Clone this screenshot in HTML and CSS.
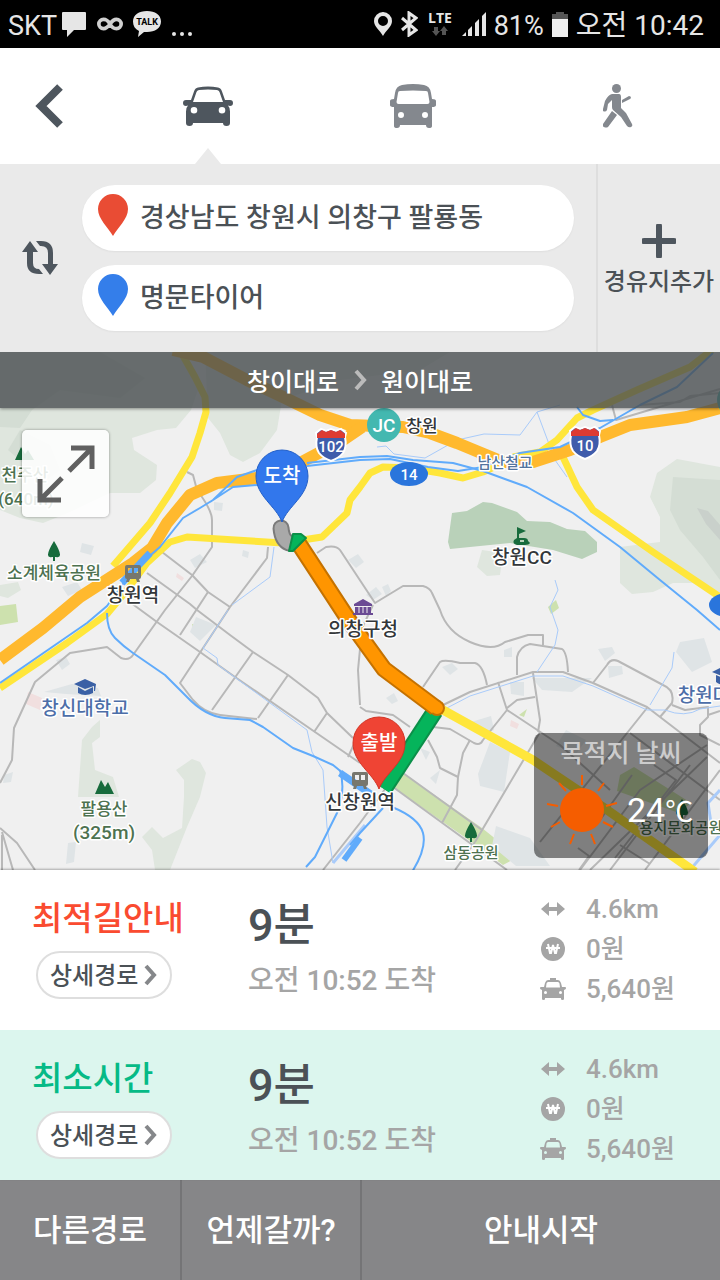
FILE: index.html
```html
<!DOCTYPE html>
<html lang="ko">
<head>
    <meta charset="UTF-8">
    <meta name="viewport" content="width=device-width, initial-scale=1.0">
    <title>길찾기</title>
    <link rel="stylesheet" href="styles.css">
</head>
<body>
    <!-- shared icons -->
    <svg class="sprite" aria-hidden="true">
        <symbol id="icon-distance" viewBox="0 0 26 16">
            <path d="M1 8 9 1v5h8V1l8 7-8 7v-5H9v5z"/>
        </symbol>
        <symbol id="icon-won" viewBox="0 0 26 26">
            <circle cx="13" cy="13" r="12"/>
            <path d="M8 8l2 9h1l2-8 2 8h1l2-9M6 12h14" fill="none" stroke="#fff" stroke-width="2"/>
        </symbol>
        <symbol id="icon-taxi" viewBox="0 0 26 24">
            <path fill-rule="evenodd" d="M10 1h6v2h2q2 0 3 3l1 4h3q1 0 1 1t-1 1.500l-1 .5v9q0 1-1.500 1T21 22v-1H5v1q0 1-1.500 1T2 22v-9l-1-.5Q0 12 0 11t1-1h3l1-4q1-3 3-3h2zM8 5Q7 5 6.500 6.500L6 10.500h14l-.5-4Q19 5 18 5zM5.500 14a1.500 1.500 0 1 0 0 3 1.500 1.500 0 0 0 0-3zM20.500 14a1.500 1.500 0 1 0 0 3 1.500 1.500 0 0 0 0-3z"/>
        </symbol>
        <symbol id="icon-next" viewBox="0 0 14 22">
            <path d="M3 2l8 9-8 9" fill="none" stroke="currentColor" stroke-width="4"/>
        </symbol>
        <symbol id="icon-pin" viewBox="0 0 32 44">
            <path d="M16 43C11 34 1 26 1 16a15 15 0 0 1 30 0c0 10-10 18-15 27z"/>
        </symbol>
    </svg>

    <header class="status-bar">
        <div class="status-left">
            <span class="carrier">SKT</span>
            <svg width="26" height="26" viewBox="0 0 26 26" fill="#e6e6e6"><path d="M2 1h22q1 0 1 1v16q0 1-1 1H13l-7 7v-7H2q-1 0-1-1V2q0-1 1-1z"/></svg>
            <svg width="26" height="16" viewBox="0 0 28 16" fill="none" stroke="#d0d0d0" stroke-width="4"><path d="M14 8C11 3 9 3 7 3a5 5 0 0 0 0 10c3 0 5-2 7-5s4-5 7-5a5 5 0 0 1 0 10c-3 0-5-1-7-5z"/></svg>
            <svg width="28" height="26" viewBox="0 0 28 26" fill="#e6e6e6"><path d="M14 0c8 0 14 4 14 10.500S22 21 14 21l-3 0-6 5 1-6c-4-2-6-5-6-9.500C0 4 6 0 14 0z"/><text class="talk" x="14" y="14" fill="#000">TALK</text></svg>
            <svg width="22" height="26" viewBox="0 0 22 26" fill="#e6e6e6"><circle cx="3" cy="23" r="2"/><circle cx="11" cy="23" r="2"/><circle cx="19" cy="23" r="2"/></svg>
        </div>
        <div class="status-right">
            <svg width="18" height="24" viewBox="0 0 18 24" fill="#e6e6e6"><path fill-rule="evenodd" d="M9 24C6 18 0 15 0 9a9 9 0 0 1 18 0c0 6-6 9-9 15zM9 4a5 5 0 1 0 0 10A5 5 0 0 0 9 4z"/></svg>
            <svg width="18" height="26" viewBox="0 0 18 26" fill="none" stroke="#e6e6e6" stroke-width="3"><path d="M2 7l14 12-7 5V2l7 5L2 19"/></svg>
            <svg class="network" width="28" height="26" viewBox="0 0 28 26"><text class="lte" x="14" y="12" fill="#e6e6e6">LTE</text><path d="M8 16h4v4h2l-4 5-4-5h2zM18 15l4 5h-2v4h-4v-4h-2z" fill="#555"/></svg>
            <svg width="24" height="24" viewBox="0 0 24 24" fill="#e6e6e6"><path d="M0 24l4-4v4zM6 18l4-4v10H6zM13 11l4-4v17h-4zM20 4l4-4v24h-4z"/></svg>
            <span class="battery">81%</span>
            <svg width="16" height="25" viewBox="0 0 16 25"><path d="M4 0h8v2h4v5H0V2h4z" fill="#555"/><path d="M0 7h16v18H0z" fill="#efefef"/></svg>
            <time class="clock">오전 10:42</time>
        </div>
    </header>

    <nav class="modes">
        <button type="button" class="back" aria-label="뒤로">
            <svg width="30" height="46" viewBox="0 0 30 46"><path d="M26 4 7 23l19 19" fill="none" stroke="#4e565e" stroke-width="8"/></svg>
        </button>
        <button type="button" class="mode active" aria-label="자동차">
            <svg width="50" height="40" viewBox="0 0 50 40"><path fill-rule="evenodd" d="M15 1.500Q25-.5 35 1.500q3 .5 4 4L42 14h5q3 0 3 3t-3 3l-2-.5q2 2 2 6V37q0 3-3.500 3T40 37H10q0 3-3.500 3T3 37V25.500q0-4 2-6L3 20q-3 0-3-3t3-3h5l3-8.500q1-3.500 4-4zM16 4q-2 .5-2.500 2L10 16h30L36.500 6Q36 4.500 34 4q-9-1-18 0zM11 21a3.300 3.300 0 1 0 0 6.600 3.300 3.300 0 0 0 0-6.600zM39 21a3.300 3.300 0 1 0 0 6.600 3.300 3.300 0 0 0 0-6.600z"/></svg>
        </button>
        <button type="button" class="mode" aria-label="버스">
            <svg width="46" height="44" viewBox="0 0 46 44"><path fill-rule="evenodd" d="M12 1q11-2 22 0 6 1 7 8l1 6q4 0 4 2v4q0 2-4 2v19q0 2-3 2t-3-3H10q0 3-3 3t-3-2V23q-4 0-4-2v-4q0-2 4-2l1-6q1-7 7-8zM10 7q-2 0-2 2L6.500 18q0 2 2 2h29q2 0 2-2L38 9q0-2-2-2-13-1-26 0zM11 28a3 3 0 1 0 0 6 3 3 0 0 0 0-6zM35 28a3 3 0 1 0 0 6 3 3 0 0 0 0-6z"/></svg>
        </button>
        <button type="button" class="mode" aria-label="도보">
            <svg width="30" height="44" viewBox="0 0 30 44"><circle cx="13.500" cy="4.500" r="4.500"/><path d="M9 10h7q2 0 2 3v11l5 5 6 11q1 2-1 3t-4-1l-6-9-8-7q-1-1-1-3V16l-4 4-1 6q-1 2-3 1.500T0 25l2-8q3-6 7-7zM19 16l7-4q2 0 2 2l-1 1-8 4zM9 27l5 4-9 12q-2 1-4 0t-1-3z"/></svg>
        </button>
    </nav>

    <form class="route-form">
        <button type="button" class="swap" aria-label="출발지와 도착지 바꾸기">
            <svg width="36" height="34" viewBox="0 0 36 34" fill="#4e565e"><path d="M8 0l8 11h-5v11q0 6 6 6l4 5h-4Q5 33 5 22V11H0zM28 34l-8-11h6V12q0-7-7-7h-1l-4-5h5q12 0 12 12v11h5z"/></svg>
        </button>
        <div class="places">
            <label class="place start">
                <svg width="32" height="44" role="img" aria-label="출발지"><use href="#icon-pin"/></svg>
                <input type="text" name="start" value="경상남도 창원시 의창구 팔룡동">
            </label>
            <label class="place goal">
                <svg width="32" height="44" role="img" aria-label="도착지"><use href="#icon-pin"/></svg>
                <input type="text" name="goal" value="명문타이어">
            </label>
        </div>
        <button type="button" class="add-stop">
            <svg width="34" height="34" viewBox="0 0 34 34"><path d="M17 2v30M2 17h30" stroke="#4e565e" stroke-width="6" stroke-linecap="round"/></svg>
            <span>경유지추가</span>
        </button>
    </form>

    <main class="map">
        <svg class="map-canvas" viewBox="0 352 720 518" preserveAspectRatio="xMidYMid slice">
            <rect x="-400" y="0" width="1600" height="1400" fill="#f0f0f0"/>

            <!-- hills and parks -->
            <g fill="#dfe6de">
                <path d="M0 352H180L198 390 191 410 176 428 157 430 132 438 134 450 157 465 156 480 140 493H110L68 513 43 523 20 518 0 510z"/>
                <path d="M205 352H450L420 370 340 380 282 400 277 430 260 453 243 462 230 455 220 433 208 418z"/>
                <path d="M677 459 720 467V597L693 583H673L653 592 632 594 620 583V547L660 542V517L650 497 657 473z"/>
                <path d="M482 550 503 553 500 575 487 576 477 567z"/>
                <path d="M92 727 100 720V737L92 743 95 770 113 777 119 797H78L82 740z"/>
                <path d="M176 770 192 759 200 762 206 773 200 797 187 827 170 870H155L152 850 142 837 152 827 163 838 182 828 184 797V780z"/>
                <path d="M0 585 18 582 21 590 8 598 0 596z"/>
            </g>
            <g fill="#d4ddd4">
                <path d="M0 352H100L145 378 120 398 60 390 32 410 20 428 0 427z"/>
                <path d="M20 430 8 450 22 462 40 485 60 470 50 445z"/>
                <path d="M673 477 720 480V580L703 557 680 530 670 510z"/>
            </g>
            <path d="M697 508 708 511 720 525V540L706 524z" fill="#c9d0cb"/>
            <path d="M452 513 467 511 483 502 492 503 517 512 527 521 550 522 567 529 585 531 597 542V552L582 559 553 550 510 543 450 549 448 542z" fill="#b9d1b9"/>
            <g fill="#cde1ae">
                <path d="M403 773 482 828 518 857 503 865 473 843 393 787z"/>
                <path d="M0 606 16 604 18 622 0 625zM519 715 527 709 524 717zM192 624l8 1 0 6-6 2zM548 607l8-7 3 8-8 6zM620 775l14-8 57 36-12 10-62-22z"/>
            </g>
            <g fill="#dfe4e6">
                <path d="M44 692 72 684 98 688 101 696 66 694zM56 660 66 657 70 664 62 670zM82 543l12 3-3 9-11-3zM62 587l15-5 5 8-14 6zM190 560l10-6 7 8-12 6zM214 502l9 1-1 8-8-1zM243 550l6 2-1 6-6-2zM196 617l20 8-16 16-10-9zM348 560l10-6 6 8-8 6zM366 595l10-8 6 7-9 6zM382 587l6-3 3 7-5 5zM4 775l9-3-2 10-8 1zM68 843l8-1-2 20-8 2z"/>
                <path d="M504 650l8-3v10l-8 0zM442 667l10-4 6 6-8 6zM386 698l8-5 4 8-6 3zM510 682h14v14l-13-2zM532 678h60l-20 14-30-2zM598 649l14-2 3 6-10 8zM608 666l14 0 1 8-14 4zM680 642l24-4 8 24-20 10-16-20zM490 742l20 10-6 40-24-6-2-12zM471 722l20-6 3 14-12 6zM496 826l34 12 20 28h-34l-24-20zM430 778l10-8-4 14zM566 730l20 10-10 14-20-8zM420 748l10 4-4 8z"/>
            </g>
            <path d="M28 692l14 6-2 12-14-6zM511 720l8 4-2 5-7-3zM177 573l7 5-2 3-6-4z" fill="#f1dfdf"/>

            <!-- minor roads -->
            <g class="road minor">
                <path d="M187 472 193 475 197 490Q212 510 212 520V547L192 576 165 610 133 655Q129 661 121 658L107 647 70 653 35 682 14 728 12 760 0 783"/>
                <path d="M162 552 192 575 208 592 230 607M268 547 267 558 230 607 180 683 193 700Q204 713 220 715L257 719"/>
                <path d="M147 573 190 604 197 610 230 635 253 652 288 675 318 698 327 713 353 738"/>
                <path d="M127 600 157 622 200 652 235 677 315 732 360 763"/>
                <path d="M208 592 180 635M253 652 212 710M288 675 258 718M327 713 314 732M355 742 348 757"/>
                <path d="M317 553 326 547Q336 545 340 550L375 603 403 586H423Q430 588 432 593L440 610Q447 632 470 642T505 642L528 635H543V645"/>
                <path d="M373 605 362 628 358 670 360 705"/>
                <path d="M423 687 440 662Q444 659 460 663H475Q483 665 487 685"/>
                <path d="M443 705 470 692 533 672H563L593 683 647 707 720 763"/>
                <path d="M517 675V657Q520 646 530 644L562 649Q567 652 568 672"/>
                <path d="M498 682 507 710 483 740Q480 746 474 743L450 729 433 727M507 708 517 700 535 697M533 673 540 720 538 732M507 710 560 745 610 790"/>
                <path d="M593 683 607 665Q611 658 618 661L663 685Q675 690 672 703L660 717M672 705 685 710 708 707V717L700 725V735L720 745M708 715 720 711"/>
                <path d="M360 707 366 711 393 715 410 727M475 842 540 732M647 708 540 842M470 740 463 753 458 777 457 795 442 823M428 740 437 757 440 768 458 777"/>
                <path d="M403 773 482 830M393 787 507 870M0 828 17 843 35 870M2 832 13 870M2 835V870M455 870 475 842M323 870 360 823 388 785"/>
                <path d="M630 733 720 800M580 870 640 790 707 745M590 870 707 757M610 870 690 765M645 870 720 770M578 848 589 856 579 870M620 845 650 864M600 820 632 775M654 765 676 780 615 858"/>
                <path d="M612 405 616 420 720 389M640 405 680 402 690 396 720 393"/>
            </g>

            <!-- water -->
            <g class="road creek">
                <path d="M445 709 470 696 533 676H563L593 686 647 710H665Q685 718 700 709L720 706"/>
                <path d="M228 610 203 648 217 658 218 665 307 730 312 752 323 770 327 827 333 863"/>
                <path d="M377 447 386 446 394 454 425 458 457 440 484 434 520 435 537 412 560 405M537 412 555 460 567 477M555 580 558 590 550 607 558 630 555 645 537 672"/>
                <path d="M274 547 270 577 232 605M674 652 672 668 650 705"/>
                <path d="M333 863 365 825M720 790 708 803 712 830M690 870 720 835" stroke-width="3"/>
            </g>

            <!-- highways -->
            <g class="road yellow">
                <path d="M182 354 195 377 205 397 206 412 200 433 192 457 170 493 150 523 113 566"/>
                <path d="M513 457 540 452 557 440 577 418 593 410 637 390 690 367 712 350"/>
                <path d="M503 463 483 472 463 478 440 473 410 468 383 467 370 473 360 487 350 500 347 513 322 537 283 543 187 537 170 542 147 563 127 590 107 614 67 643 0 688"/>
                <path d="M563 457 577 487 593 510 653 552 720 597"/>
                <path class="wide" d="M443 710 533 760 603 807 695 872"/>
            </g>
            <g class="road orange">
                <path d="M173 350 203 357 247 380 283 397 320 415 350 425 403 427 430 433 457 443 503 462H533L570 450 600 437 630 425 687 417 720 408"/>
                <path d="M362 427 340 442 313 456 300 463 257 478 217 483 190 495 167 523 152 548 133 563 80 597 43 628 0 660"/>
            </g>

            <!-- railways -->
            <g class="road rail">
                <path d="M257 470 237 477 213 500 200 508 183 518 160 547 133 570 107 606 87 623 0 683M257 485 233 487 210 502"/>
                <path d="M307 463 360 457 387 456 413 460 453 463 483 471 527 487 573 513 620 547 660 580 697 610 720 630"/>
                <path d="M307 466 360 460 390 459 428 467 458 471 483 467 520 453 560 447 600 428 640 405 677 387 713 353M577 407 583 415 600 421 613 420"/>
                <path d="M107 613Q107 630 115 638T133 653L165 675 187 697Q205 716 225 718L250 720 263 727 293 748 313 756 333 765 360 787"/>
                <path d="M340 770Q346 790 337 813L315 857 306 867M383 808 360 833 350 845M392 807Q419 818 423 833T412 872"/>
                <path d="M340 773 375 797" stroke-width="7"/>
                <path d="M344 860 360 838" stroke-width="6"/>
            </g>
            <path d="M122 583 150 553" stroke="#5ca9fb" stroke-width="7"/>

            <!-- selected route -->
            <g fill="none" stroke-linejoin="round">
                <path d="M281 528Q282 540 289 543" stroke="#7b7b7b" stroke-width="17" stroke-linecap="round"/>
                <path d="M281 528Q282 540 289 543" stroke="#a9a9a9" stroke-width="13" stroke-linecap="round"/>
                <path d="M435 711 384 789" stroke="#0b8f49" stroke-width="17"/>
                <path d="M435 711 384 789" stroke="#05b45b" stroke-width="13"/>
                <path d="M299 544 350 622 384 669 436 708" stroke="#c57200" stroke-width="17"/>
                <circle cx="437" cy="708" r="7" fill="#ff9500" stroke="#c57200" stroke-width="2"/>
                <path d="M299 544 350 622 384 669 436 708" stroke="#ff9500" stroke-width="13"/>
                <path d="M293 534h8l5 4-13 13h-4z" fill="#05b45b" stroke="#0b8f49" stroke-width="2"/>
            </g>

            <!-- markers -->
            <g class="shield">
                <path d="M331 461q-8-3-12-8-4-6-2-16l-1-4 5-4 5 2 5-2 5 2 5-2 5 4-1 4q2 10-2 16-4 5-12 8z" fill="#3f5cab" stroke="#fff" stroke-width="2"/>
                <path d="M317 434l5-4 4 2 5-2 5 2 4-2 5 4v4h-28z" fill="#dd3b32"/>
                <text x="331" y="452">102</text>
                <path d="M585 459q-8-3-12-8-4-6-2-16l-1-4 5-4 5 2 5-2 5 2 5-2 5 4-1 4q2 10-2 16-4 5-12 8z" fill="#3f5cab" stroke="#fff" stroke-width="2"/>
                <path d="M571 432l5-4 4 2 5-2 5 2 4-2 5 4v4h-28z" fill="#dd3b32"/>
                <text x="585" y="451">10</text>
                <ellipse cx="409" cy="474" rx="19" ry="12" fill="#2a75dc"/>
                <text x="409" y="480">14</text>
                <ellipse cx="728" cy="605" rx="19" ry="12" fill="#2a75dc"/>
                <circle cx="384" cy="425" r="17" fill="#43b8b0"/>
                <circle cx="734" cy="400" r="17" fill="#43b8b0"/>
                <text class="jc" x="384" y="432">JC</text>
            </g>
            <g fill="#176b3c">
                <path d="M15 460 21 447 25 454 28 450 34 460zM95 794 101 780 105 787 108 782 114 794z"/>
                <path d="M54 541q11 18 2 16h-1v4h-2v-4h-1q-9 2 2-16zM471 822q11 18 2 16h-1v4h-2v-4h-1q-9 2 2-16zM682 799q11 18 2 16h-1v4h-2v-4h-1q-9 2 2-16z"/>
                <path fill-rule="evenodd" d="M517 527l9 4-7 3v4h5q4 0 4 3 5 3-3 4h-8q-5-1-3-5l3-2zM520 540v2h4v-2z"/>
            </g>
            <path d="M85 679 96 684 95 691H94V686L85 689 74 684zM78 687l7 4 8-4v6q-8 4-15 0zM724 666 735 671 724 677 712 672zM716 675l9 4v6q-6 0-9-3z" fill="#3a60a5"/>
            <path d="M363 599l9 5v2h-18v-2zM355 607h16v6h-16zM353 613h20v2h-20z" fill="#6b4b94"/>
            <path d="M359 607v6M363 607v6M367 607v6" stroke="#f0f0f0"/>
            <g fill="#77776e">
                <path fill-rule="evenodd" d="M127 565h12q2 0 2 2v10q0 2-2 2l1 3h-3l-1-3h-6l-1 3h-3l1-3q-2 0-2-2v-10q0-2 2-2zM128 568v5h4v-5zM134 568v5h4v-5z"/>
                <path fill-rule="evenodd" d="M354 772h12q2 0 2 2v10q0 2-2 2l1 3h-3l-1-3h-6l-1 3h-3l1-3q-2 0-2-2v-10q0-2 2-2zM355 775v5h4v-5zM361 775v5h4v-5z"/>
            </g>

            <!-- labels -->
            <g class="label">
                <text class="small" x="422" y="432">창원</text>
                <text class="rail-name tiny" x="505" y="468">남산철교</text>
                <text class="park small" x="25" y="481">천주산</text>
                <text class="park small" x="26" y="505">(640m)</text>
                <text class="park small" x="54" y="579">소계체육공원</text>
                <text x="133" y="602">창원역</text>
                <text x="522" y="564">창원CC</text>
                <text x="363" y="636">의창구청</text>
                <text class="school" x="85" y="715">창신대학교</text>
                <text class="school" x="704" y="702">창원대</text>
                <text class="park small" x="104" y="815">팔용산</text>
                <text class="park" x="104" y="839">(325m)</text>
                <text x="360" y="809">신창원역</text>
                <text class="park tiny" x="471" y="858">삼동공원</text>
                <text class="park tiny" x="681" y="833">용지문화공원</text>
            </g>

            <g class="flag">
                <path d="M282 522C276 506 256 496 256 476a26 26 0 0 1 52 0c0 20-20 30-26 46z" fill="#3277ec" stroke="#225fc8"/>
                <text x="282" y="483">도착</text>
                <path d="M379 789C373 773 353 763 353 743a26 26 0 0 1 52 0c0 20-20 30-26 46z" fill="#ef4434" stroke="#d23425"/>
                <text x="379" y="750">출발</text>
            </g>
        </svg>

        <div class="via">
            <span>창이대로</span>
            <svg width="14" height="22"><use href="#icon-next"/></svg>
            <span>원이대로</span>
        </div>

        <button type="button" class="expand" aria-label="지도 확대">
            <svg width="58" height="58" viewBox="0 0 58 58" fill="none" stroke="#606060" stroke-width="5"><path d="M34 3h21v21M54 4 32 26M3 34v21h21M4 54l21-21"/></svg>
        </button>

        <section class="weather">
            <h2>목적지 날씨</h2>
            <div class="weather-now">
                <svg width="70" height="70" viewBox="0 0 70 70"><circle cx="35" cy="35" r="22" fill="#f55d00"/><path d="M35 0v10M57 8l-6 8M70 28l-11 3M66 52l-10-5M48 69l-4-10M23 69l4-10M4 52l9-5M0 29l11 2M12 8l7 8" stroke="#f55d00" stroke-width="2"/></svg>
                <span class="temp">24<span class="unit">℃</span></span>
            </div>
        </section>
    </main>

    <section class="results">
        <article class="result">
            <div class="result-name">
                <h2 class="best">최적길안내</h2>
                <button type="button" class="detail"><span>상세경로</span><svg width="14" height="22"><use href="#icon-next"/></svg></button>
            </div>
            <div class="result-time">
                <strong>9분</strong>
                <span>오전 10:52 도착</span>
            </div>
            <ul class="facts">
                <li><svg width="26" height="16"><use href="#icon-distance"/></svg>4.6km</li>
                <li><svg width="26" height="26"><use href="#icon-won"/></svg>0원</li>
                <li><svg width="26" height="24"><use href="#icon-taxi"/></svg>5,640원</li>
            </ul>
        </article>
        <article class="result selected">
            <div class="result-name">
                <h2 class="fastest">최소시간</h2>
                <button type="button" class="detail"><span>상세경로</span><svg width="14" height="22"><use href="#icon-next"/></svg></button>
            </div>
            <div class="result-time">
                <strong>9분</strong>
                <span>오전 10:52 도착</span>
            </div>
            <ul class="facts">
                <li><svg width="26" height="16"><use href="#icon-distance"/></svg>4.6km</li>
                <li><svg width="26" height="26"><use href="#icon-won"/></svg>0원</li>
                <li><svg width="26" height="24"><use href="#icon-taxi"/></svg>5,640원</li>
            </ul>
        </article>
    </section>

    <footer class="actions">
        <button type="button">다른경로</button>
        <button type="button">언제갈까?</button>
        <button type="button">안내시작</button>
    </footer>
</body>
</html>
```
FILE: styles.css
```css
* {
    box-sizing: border-box;
}
body {
    display: flex;
    flex-direction: column;
    min-height: 100vh;
    margin: 0;
    background-color: #fff;
    color: #4b5156;
    font-family: Roboto, "Noto Sans CJK KR", sans-serif;
    font-weight: 500;
}
h2 {
    margin: 0;
    font-weight: 500;
}
button {
    padding: 0;
    border: none;
    background: none;
    color: inherit;
    font: inherit;
    cursor: pointer;
}
svg {
    display: block;
    flex: none;
}
.sprite {
    position: absolute;
    width: 0;
    height: 0;
}

/* status bar */
.status-bar {
    display: flex;
    justify-content: space-between;
    align-items: center;
    height: 48px;
    padding: 0 16px 0 8px;
    background-color: #000;
    color: #e6e6e6;
    font-weight: 400;
    line-height: 40px;
    white-space: nowrap;
}
.status-left,
.status-right {
    display: flex;
    align-items: center;
}
.status-left {
    gap: 10px;
}
.carrier,
.battery,
.clock {
    padding-top: 4px;
    font-size: 27px;
}
.carrier {
    margin-right: -6px;
}
.talk {
    font: 700 9px Roboto, sans-serif;
    text-anchor: middle;
}
.status-right {
    gap: 8px;
}
.network {
    overflow: visible;
}
.lte {
    font: 700 14px "Open Sans", sans-serif;
    text-anchor: middle;
}
.clock {
    font-size: 28px;
}

/* transport modes */
.modes {
    display: grid;
    grid-template-columns: 105px 1fr 1fr 1fr;
    height: 116px;
}
.modes button {
    display: flex;
    align-items: center;
    justify-content: center;
}
.modes .back {
    padding-right: 8px;
}
.mode {
    position: relative;
    fill: #84888e;
}
.mode.active {
    fill: #4e565e;
}
.mode.active::after {
    content: "";
    position: absolute;
    bottom: 0;
    left: 50%;
    margin-left: -13px;
    border: 13px solid transparent;
    border-top: none;
    border-bottom: 16px solid #eaeaea;
}

/* start and destination */
.route-form {
    display: grid;
    grid-template-columns: 82px 1fr 124px;
    height: 188px;
    background-color: #eaeaea;
}
.swap {
    display: flex;
    align-items: center;
    padding-left: 22px;
}
.places {
    display: flex;
    flex-direction: column;
    gap: 14px;
    padding: 21px 22px 21px 0;
}
.place {
    display: flex;
    align-items: center;
    gap: 11px;
    height: 66px;
    padding: 0 15px 6px;
    border-radius: 33px;
    background-color: #fff;
    box-shadow: 0 1px 2px rgba(0, 0, 0, 0.05);
}
.place input {
    flex: 1;
    min-width: 0;
    padding: 0;
    border: none;
    outline: none;
    background: none;
    color: inherit;
    font: inherit;
    font-size: 27px;
}
.start svg {
    fill: #e94c34;
}
.goal svg {
    fill: #347eea;
}
.add-stop {
    display: flex;
    flex-direction: column;
    align-items: center;
    justify-content: center;
    gap: 6px;
    padding-top: 8px;
    border-left: 2px solid #dedede;
    font-size: 24px;
    line-height: 36px;
    white-space: nowrap;
}

/* map */
.map {
    position: relative;
    flex: 1;
    min-height: 518px;
    overflow: hidden;
}
.map-canvas {
    position: absolute;
    width: 100%;
    height: 100%;
}
.road {
    fill: none;
    stroke-linejoin: round;
}
.minor {
    stroke: #b8b8b8;
    stroke-width: 2;
}
.creek {
    stroke: #a9cbfa;
    stroke-width: 1;
}
.yellow {
    stroke: #ffe63b;
    stroke-width: 7;
}
.yellow .wide {
    stroke-width: 9;
}
.orange {
    stroke: #ffb92e;
    stroke-width: 12;
}
.rail {
    stroke: #60abfb;
    stroke-width: 2;
}
.label text {
    fill: #33373a;
    stroke: #fff;
    stroke-width: 3;
    stroke-linejoin: round;
    paint-order: stroke;
    font-size: 19px;
    text-anchor: middle;
}
.label .small {
    font-size: 17px;
}
.label .tiny {
    font-size: 15px;
}
.label .park {
    fill: #4d7250;
}
.label .school {
    fill: #4d6ea8;
}
.label .rail-name {
    fill: #53759f;
}
.shield text {
    fill: #fff;
    font-size: 15px;
    text-anchor: middle;
}
.shield .jc {
    font-size: 19px;
}
.flag text {
    fill: #fff;
    font-size: 20px;
    text-anchor: middle;
}
.via {
    position: absolute;
    top: 0;
    left: 0;
    right: 0;
    display: flex;
    align-items: center;
    justify-content: center;
    gap: 14px;
    height: 56px;
    background-color: rgba(72, 77, 80, 0.8);
    box-shadow: 0 1px 3px rgba(0, 0, 0, 0.4);
    color: #fff;
    font-size: 25px;
}
.via svg {
    color: #bbb;
}
.expand {
    position: absolute;
    top: 78px;
    left: 22px;
    display: flex;
    align-items: center;
    justify-content: center;
    width: 87px;
    height: 87px;
    border-radius: 5px;
    background-color: rgba(255, 255, 255, 0.87);
    box-shadow: 0 0 3px rgba(0, 0, 0, 0.4);
}
.weather {
    position: absolute;
    right: 12px;
    bottom: 12px;
    width: 174px;
    height: 125px;
    border-radius: 8px;
    background-color: rgba(0, 0, 0, 0.47);
    color: #fff;
}
.weather h2 {
    color: #ccc;
    font-size: 25px;
    line-height: 42px;
    text-align: center;
}
.weather-now {
    display: flex;
    align-items: center;
    gap: 10px;
    padding-left: 13px;
}
.temp {
    font-size: 34px;
    font-weight: 400;
    line-height: 42px;
    white-space: nowrap;
}
.unit {
    font-family: "Noto Sans CJK KR", sans-serif;
    font-size: 28px;
    line-height: 28px;
}

/* route results */
.results {
    position: relative;
    background-color: #fff;
    box-shadow: 0 -1px 2px rgba(0, 0, 0, 0.3);
}
.result {
    display: grid;
    grid-template-columns: 216px 1fr 180px;
    height: 160px;
    padding-left: 32px;
}
.selected {
    height: 150px;
    background-color: #dcf6ee;
}
.result-name {
    padding-top: 26px;
}
.result h2 {
    font-size: 33px;
    line-height: 46px;
}
.best {
    color: #fa4b30;
}
.fastest {
    color: #05ba86;
}
.detail {
    display: flex;
    align-items: center;
    gap: 5px;
    height: 48px;
    margin: 9px 0 0 4px;
    padding: 0 13px 0 12px;
    border: 2px solid #dedede;
    border-radius: 24px;
    background-color: #fff;
    font-size: 24px;
}
.detail span {
    padding-bottom: 4px;
}
.detail svg {
    color: #85878a;
}
.result-time {
    display: flex;
    flex-direction: column;
    gap: 12px;
    padding-top: 30px;
}
.result-time strong {
    font-size: 45px;
    font-weight: 500;
    line-height: 52px;
}
.result-time span {
    color: #a5a5a5;
    font-size: 28px;
    line-height: 34px;
}
.facts {
    margin: 0;
    padding: 19px 0 0;
    color: #a5a5a5;
    font-size: 26px;
    line-height: 40px;
    list-style: none;
}
.facts li {
    display: flex;
    align-items: center;
    gap: 20px;
    height: 40px;
}
.facts svg {
    fill: #a5a5a5;
}

/* bottom actions */
.actions {
    display: grid;
    grid-template-columns: 1fr 1fr 2fr;
    height: 100px;
    background-color: #868688;
    color: #fff;
    font-size: 31px;
}
.actions button {
    padding-bottom: 6px;
}
.actions button + button {
    border-left: 2px solid #747476;
}
```
